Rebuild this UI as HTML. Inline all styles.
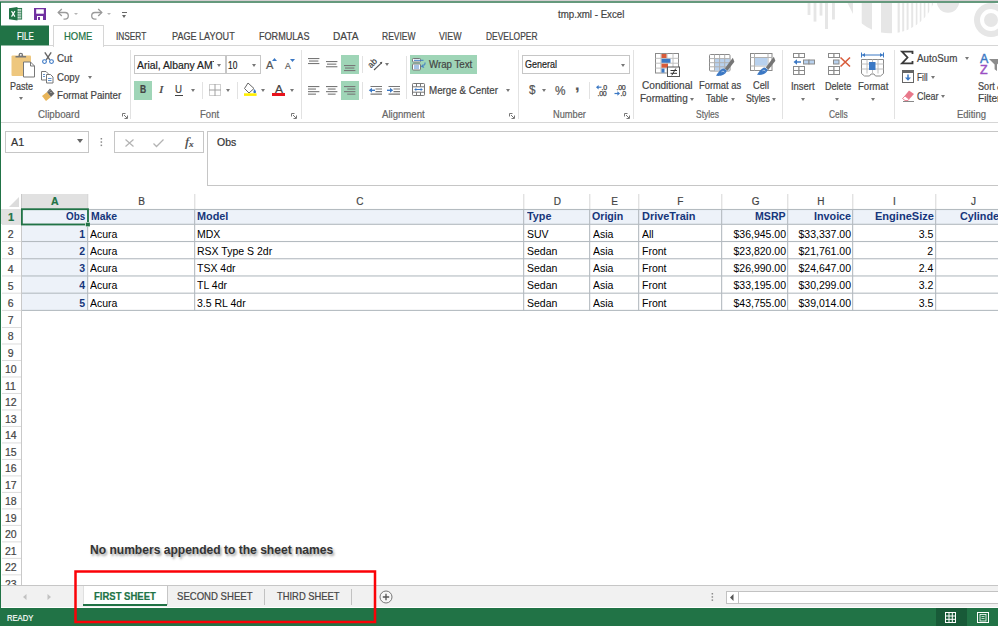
<!DOCTYPE html>
<html><head><meta charset="utf-8"><title>tmp.xml - Excel</title>
<style>
html,body{margin:0;padding:0;}
body{width:998px;height:626px;overflow:hidden;position:relative;background:#fff;font-family:"Liberation Sans",sans-serif;font-size:10px;color:#444;}
.a{position:absolute;}
.t{-webkit-text-stroke:0.2px;position:absolute;white-space:nowrap;line-height:normal;transform-origin:0 0;}
.sep{position:absolute;width:1px;background:#e2e2e2;top:50px;height:69px;}
.hl{position:absolute;background:#9fd5b7;}
.ar{position:absolute;width:0;height:0;border-left:2.5px solid transparent;border-right:2.5px solid transparent;border-top:3px solid #777;}
svg{position:absolute;overflow:visible;}

</style></head><body>
<!-- frame -->
<div class="a" style="left:0;top:0;width:998px;height:1px;background:#d4ced1"></div>
<div class="a" style="left:0;top:1px;width:998px;height:2px;background:#65997d"></div>
<div class="a" style="left:0;top:2px;width:1px;height:624px;background:#217346"></div>
<!-- title -->
<svg style="left:0;top:0" width="998" height="46" viewBox="0 0 998 46"><defs><clipPath id="cpT"><rect x="0" y="3" width="998" height="43"/></clipPath><clipPath id="cpS"><rect x="861.7" y="3" width="10.3" height="40"/><rect x="881" y="3" width="11.0" height="40"/><rect x="897.6" y="3" width="2.2" height="40"/><rect x="902.2" y="3" width="2.0" height="40"/><rect x="906.6" y="3" width="2.0" height="40"/><rect x="911.2" y="3" width="2.0" height="40"/><rect x="915.8" y="3" width="1.6" height="40"/><rect x="919.8" y="3" width="1.6" height="40"/><rect x="923.8" y="3" width="1.6" height="40"/><rect x="927.8" y="3" width="1.5" height="40"/><rect x="931.8" y="3" width="1.2" height="40"/></clipPath></defs><g fill="#e6e6e6" clip-path="url(#cpT)"><rect x="807.6" y="3" width="2.8" height="12"/><rect x="813.6" y="3" width="2.8" height="18.6"/><rect x="819.6" y="3" width="2.8" height="12.6"/><rect x="825" y="3" width="3.0" height="26"/><rect x="832" y="3" width="2.9" height="16.5"/><polygon points="847.5,3 853,3 853,14"/><circle cx="948" cy="1.5" r="11.3"/><path fill-rule="evenodd" d="M974,20 a17,17 0 1,0 34,0 a17,17 0 1,0 -34,0 Z M980,20 a11,11 0 1,0 22,0 a11,11 0 1,0 -22,0 Z"/><circle cx="991" cy="20" r="7"/></g><g clip-path="url(#cpS)"><circle cx="890" cy="-13.3" r="46.5" fill="#e6e6e6"/></g></svg>
<div class="t" style="left:558.4px;top:9.00px;font-size:10px;color:#444;transform:scaleX(0.9716);">tmp.xml - Excel</div>
<svg style="left:9px;top:7px" width="13.5" height="13.5" viewBox="0 0 16 14" preserveAspectRatio="none"><rect x="8" y="1.5" width="7" height="11" fill="#fff" stroke="#217346" stroke-width="1"/><path d="M10.5,1.5v11M13,1.5v11M8,4.5h7M8,7h7M8,9.5h7" stroke="#217346" stroke-width=".7"/><polygon points="0,1.3 10,0 10,14 0,12.7" fill="#217346"/><path d="M3,4.2l4,5.8M7,4.2l-4,5.8" stroke="#fff" stroke-width="1.4"/></svg>
<svg style="left:34px;top:8px" width="12" height="12" viewBox="0 0 12 12"><path d="M0,0h12v12h-12z" fill="#7030a0"/><rect x="2.2" y="1.3" width="7.6" height="4.4" fill="#fff"/><rect x="3" y="8" width="6" height="4" fill="#fff"/><rect x="4" y="9" width="2" height="3" fill="#7030a0"/></svg>
<svg style="left:57px;top:8px" width="14" height="12" viewBox="0 0 14 12"><path d="M1.5,4.5h6.5a3.3,3.3 0 0 1 0,6.6h-1.5" fill="none" stroke="#9a9a9a" stroke-width="1.3"/><path d="M4.8,1L1.2,4.5l3.6,3.5" fill="none" stroke="#9a9a9a" stroke-width="1.3"/></svg>
<div class="ar" style="left:73.5px;top:13px;border-top-color:#b5b5b5;border-left-width:2px;border-right-width:2px;border-top-width:2.5px"></div>
<svg style="left:88.8px;top:8px" width="14" height="12" viewBox="0 0 14 12"><path d="M12.5,4.5h-6.5a3.3,3.3 0 0 0 0,6.6h1.5" fill="none" stroke="#9a9a9a" stroke-width="1.3"/><path d="M9.2,1l3.6,3.5l-3.6,3.5" fill="none" stroke="#9a9a9a" stroke-width="1.3"/></svg>
<div class="ar" style="left:106.5px;top:13px;border-top-color:#b5b5b5;border-left-width:2px;border-right-width:2px;border-top-width:2.5px"></div>
<div class="a" style="left:122px;top:12px;width:5px;height:1px;background:#666"></div>
<div class="ar" style="left:122px;top:15px;border-top-color:#666"></div>
<!-- tabs -->
<svg style="left:0;top:0" width="60" height="50"><rect x="0" y="25.5" width="49" height="20" fill="#217346"/></svg>
<div class="a" style="left:49px;top:45px;width:949px;height:1px;background:#d6d6d6"></div>
<div class="a" style="left:53px;top:25px;width:49px;height:21px;background:#fff;border:1px solid #d6d6d6;border-bottom:0"></div>
<div class="t" style="left:16.5px;top:30.00px;font-size:10.5px;color:#fff;transform:scaleX(0.7527);">FILE</div>
<div class="t" style="left:63.6px;top:30.00px;font-size:10.5px;color:#217346;transform:scaleX(0.9016);">HOME</div>
<div class="t" style="left:116px;top:30.00px;font-size:10.5px;color:#444;transform:scaleX(0.7905);">INSERT</div>
<div class="t" style="left:171.5px;top:30.00px;font-size:10.5px;color:#444;transform:scaleX(0.8643);">PAGE LAYOUT</div>
<div class="t" style="left:258.5px;top:30.00px;font-size:10.5px;color:#444;transform:scaleX(0.8656);">FORMULAS</div>
<div class="t" style="left:332.5px;top:30.00px;font-size:10.5px;color:#444;transform:scaleX(0.964);">DATA</div>
<div class="t" style="left:381.5px;top:30.00px;font-size:10.5px;color:#444;transform:scaleX(0.8088);">REVIEW</div>
<div class="t" style="left:438.5px;top:30.00px;font-size:10.5px;color:#444;transform:scaleX(0.8382);">VIEW</div>
<div class="t" style="left:485.5px;top:30.00px;font-size:10.5px;color:#444;transform:scaleX(0.8021);">DEVELOPER</div>
<!-- ribbon -->
<div class="a" style="left:1px;top:122px;width:997px;height:1px;background:#d6d6d6"></div>
<div class="sep" style="left:130px"></div>
<div class="sep" style="left:301px"></div>
<div class="sep" style="left:518px"></div>
<div class="sep" style="left:633px"></div>
<div class="sep" style="left:782px"></div>
<div class="sep" style="left:894px"></div>
<div class="t" style="left:38px;top:108.00px;font-size:10.5px;color:#666;transform:scaleX(0.9276);">Clipboard</div>
<div class="t" style="left:199.7px;top:108.00px;font-size:10.5px;color:#666;transform:scaleX(0.9088);">Font</div>
<div class="t" style="left:381.8px;top:108.00px;font-size:10.5px;color:#666;transform:scaleX(0.9143);">Alignment</div>
<div class="t" style="left:552.9px;top:108.00px;font-size:10.5px;color:#666;transform:scaleX(0.8806);">Number</div>
<div class="t" style="left:696px;top:108.00px;font-size:10.5px;color:#666;transform:scaleX(0.8044);">Styles</div>
<div class="t" style="left:829px;top:108.00px;font-size:10.5px;color:#666;transform:scaleX(0.8011);">Cells</div>
<div class="t" style="left:956.9px;top:108.00px;font-size:10.5px;color:#666;transform:scaleX(0.9032);">Editing</div>
<svg style="left:121.5px;top:113px" width="6" height="6" viewBox="0 0 6 6"><path d="M0.5,3.5v-3h3" fill="none" stroke="#777" stroke-width="1"/><path d="M2,2l3,3M5.5,2.5v3h-3" fill="none" stroke="#777" stroke-width="1"/></svg>
<svg style="left:291px;top:113px" width="6" height="6" viewBox="0 0 6 6"><path d="M0.5,3.5v-3h3" fill="none" stroke="#777" stroke-width="1"/><path d="M2,2l3,3M5.5,2.5v3h-3" fill="none" stroke="#777" stroke-width="1"/></svg>
<svg style="left:509px;top:113px" width="6" height="6" viewBox="0 0 6 6"><path d="M0.5,3.5v-3h3" fill="none" stroke="#777" stroke-width="1"/><path d="M2,2l3,3M5.5,2.5v3h-3" fill="none" stroke="#777" stroke-width="1"/></svg>
<svg style="left:623.8px;top:113px" width="6" height="6" viewBox="0 0 6 6"><path d="M0.5,3.5v-3h3" fill="none" stroke="#777" stroke-width="1"/><path d="M2,2l3,3M5.5,2.5v3h-3" fill="none" stroke="#777" stroke-width="1"/></svg>
<svg style="left:11px;top:52px" width="24" height="26" viewBox="0 0 24 26"><rect x="0.5" y="3.5" width="19.5" height="20.5" rx="1" fill="#eec77e"/><path d="M4.5,5.500v-1.500h3v-1a2.300,2.300 0 0 1 4.600,0v1h3v1.500z" fill="#777"/><circle cx="9.800" cy="2.800" r=".9" fill="#fff"/><path d="M12.500,10h7l4,4v11h-11z" fill="#fff" stroke="#777" stroke-width="1"/><path d="M19.500,10v4h4" fill="none" stroke="#777" stroke-width="1"/></svg>
<div class="t" style="left:10px;top:80.00px;font-size:10.5px;color:#444;transform:scaleX(0.8563);">Paste</div>
<div class="ar" style="left:18.5px;top:97px;border-top-color:#777"></div>
<svg style="left:42px;top:51.5px" width="12" height="12" viewBox="0 0 12 12"><path d="M2.800,0.300l5,7.500M9.200,0.300l-5,7.500" stroke="#666" stroke-width="1.400" fill="none"/><circle cx="2.500" cy="9.600" r="1.900" fill="none" stroke="#3b78c4" stroke-width="1.100"/><circle cx="9.500" cy="9.600" r="1.900" fill="none" stroke="#3b78c4" stroke-width="1.100"/></svg>
<div class="t" style="left:57.1px;top:52.00px;font-size:10.5px;color:#444;transform:scaleX(0.9361);">Cut</div>
<svg style="left:41px;top:70.5px" width="13" height="13" viewBox="0 0 13 13"><path d="M0.500,0.500h4.500l2,2v6.500h-6.500z" fill="#fff" stroke="#777"/><path d="M2,3.500h2M2,5.500h2" stroke="#3b78c4" stroke-width=".8"/><path d="M5.500,3.500h4l2.500,2.500v6h-6.500z" fill="#fff" stroke="#777"/><path d="M7,7.500h3.500M7,9.500h3.500" stroke="#3b78c4" stroke-width=".8"/></svg>
<div class="t" style="left:57.1px;top:71.00px;font-size:10.5px;color:#444;transform:scaleX(0.9219);">Copy</div>
<div class="ar" style="left:87.7px;top:76px;border-top-color:#777"></div>
<svg style="left:41px;top:88px" width="14" height="14" viewBox="0 0 14 14"><path d="M1,8l5,-4l4,5l-5,4z" fill="#e8b55a"/><path d="M6,4l3,-3.5l4.5,5l-3.5,3.5z" fill="#666"/><path d="M8,3.5l1,-1M9.5,5l1,-1" stroke="#fff" stroke-width=".7"/></svg>
<div class="t" style="left:57.1px;top:89.00px;font-size:10.5px;color:#444;transform:scaleX(0.9244);">Format Painter</div>
<div class="a" style="left:134px;top:55px;width:90px;height:17px;border:1px solid #c6c6c6;background:#fff"></div>
<div class="a" style="left:226px;top:55px;width:33px;height:17px;border:1px solid #c6c6c6;background:#fff"></div>
<div class="t" style="left:136.6px;top:59.00px;font-size:10.5px;color:#222;transform:scaleX(0.9882);clip-path:inset(0 6% 0 0);">Arial, Albany AMT</div>
<div class="ar" style="left:217.0px;top:63.5px;border-top-color:#777"></div>
<div class="t" style="left:228px;top:59.00px;font-size:10.5px;color:#222;transform:scaleX(0.7957);">10</div>
<div class="ar" style="left:252.4px;top:63.5px;border-top-color:#777"></div>
<div class="t" style="left:266.4px;top:59.00px;font-size:11.5px;color:#555;transform:scaleX(0.9646);">A</div>
<svg style="left:272.3px;top:58.3px" width="5" height="3" viewBox="0 0 5 3"><polygon points="0,3 2.5,0 5,3" fill="#3b78c4"/></svg>
<div class="t" style="left:285.2px;top:60.00px;font-size:9.5px;color:#555;transform:scaleX(0.9143);">A</div>
<svg style="left:289.8px;top:59px" width="5" height="3" viewBox="0 0 5 3"><polygon points="0,0 2.5,3 5,0" fill="#3b78c4"/></svg>
<div class="hl" style="left:134px;top:81px;width:18px;height:19px"></div>
<div class="t" style="left:139.8px;top:83.00px;font-size:10.5px;font-weight:bold;color:#444;transform:scaleX(0.8165);">B</div>
<div class="t" style="left:158.6px;top:83.00px;font-size:11px;font-style:italic;font-family:'Liberation Serif',serif;color:#444;transform:scaleX(1.1983);">I</div>
<div class="t" style="left:175.4px;top:83.00px;font-size:10.5px;color:#444;transform:scaleX(0.9218);">U</div>
<div class="a" style="left:175px;top:95px;width:8px;height:1px;background:#444"></div>
<div class="ar" style="left:190.5px;top:89px;border-top-color:#777"></div>
<div class="a" style="left:202px;top:82px;width:1px;height:17px;background:#e2e2e2"></div>
<svg style="left:209px;top:84px" width="12" height="12" viewBox="0 0 12 12"><rect x="0.5" y="0.5" width="11" height="11" fill="none" stroke="#a0a0a0" stroke-dasharray="1 1"/><path d="M6,0v12M0,6h12" stroke="#a0a0a0" stroke-width="1"/></svg>
<div class="ar" style="left:226.0px;top:89px;border-top-color:#777"></div>
<div class="a" style="left:237px;top:82px;width:1px;height:17px;background:#e2e2e2"></div>
<svg style="left:243px;top:82px" width="14" height="15" viewBox="0 0 14 15"><path d="M5,1l6,5.5l-5,4.5l-4.5,-4.5z" fill="#fff" stroke="#666" stroke-width="1"/><path d="M11.5,7c1,1.5 1.5,2.3 1.5,3a1.2,1.2 0 0 1 -2.6,0c0,-.7 .5,-1.5 1.1,-3z" fill="#3b78c4"/><rect x="1" y="11.3" width="12.6" height="2.6" fill="#ffef00"/></svg>
<div class="ar" style="left:261.0px;top:89px;border-top-color:#777"></div>
<div class="t" style="left:274.8px;top:83.00px;font-size:11px;color:#444;transform:scaleX(1.0894);">A</div>
<div class="a" style="left:271.7px;top:93.3px;width:13.5px;height:2.6px;background:#e8131c"></div>
<div class="ar" style="left:289.5px;top:89px;border-top-color:#777"></div>
<div class="hl" style="left:341px;top:55px;width:18px;height:19px"></div>
<div class="hl" style="left:341px;top:81px;width:18px;height:19px"></div>
<svg style="left:308px;top:57.8px" width="11.4" height="6.2" viewBox="0 0 11.4 6.2"><rect x="0" y="0.00" width="11.4" height="1.1" fill="#777"/><rect x="1" y="2.50" width="9.4" height="1.1" fill="#777"/><rect x="0" y="5.00" width="11.4" height="1.1" fill="#777"/></svg>
<svg style="left:326px;top:60.7px" width="11.4" height="6.400000000000003" viewBox="0 0 11.4 6.400000000000003"><rect x="0" y="0.00" width="11.4" height="1.1" fill="#777"/><rect x="1" y="2.60" width="9.4" height="1.1" fill="#777"/><rect x="0" y="5.20" width="11.4" height="1.1" fill="#777"/></svg>
<svg style="left:344.2px;top:64.9px" width="11.4" height="6.2" viewBox="0 0 11.4 6.2"><rect x="0" y="0.00" width="11.4" height="1.1" fill="#777"/><rect x="1" y="2.50" width="9.4" height="1.1" fill="#777"/><rect x="0" y="5.00" width="11.4" height="1.1" fill="#777"/></svg>
<svg style="left:308px;top:85.7px" width="11.4" height="8.799999999999994" viewBox="0 0 11.4 8.799999999999994"><rect x="0" y="0.00" width="11.4" height="1.1" fill="#777"/><rect x="0" y="2.50" width="8" height="1.1" fill="#777"/><rect x="0" y="5.10" width="11.4" height="1.1" fill="#777"/><rect x="0" y="7.60" width="8" height="1.1" fill="#777"/></svg>
<svg style="left:326px;top:85.7px" width="11.4" height="8.799999999999994" viewBox="0 0 11.4 8.799999999999994"><rect x="0" y="0.00" width="11.4" height="1.1" fill="#777"/><rect x="1.8" y="2.50" width="7.8" height="1.1" fill="#777"/><rect x="0" y="5.10" width="11.4" height="1.1" fill="#777"/><rect x="1.8" y="7.60" width="7.8" height="1.1" fill="#777"/></svg>
<svg style="left:344.2px;top:85.7px" width="11.4" height="8.799999999999994" viewBox="0 0 11.4 8.799999999999994"><rect x="0" y="0.00" width="11.4" height="1.1" fill="#777"/><rect x="3.2" y="2.50" width="8.2" height="1.1" fill="#777"/><rect x="0" y="5.10" width="11.4" height="1.1" fill="#777"/><rect x="3.2" y="7.60" width="8.2" height="1.1" fill="#777"/></svg>
<div class="a" style="left:362px;top:56px;width:1px;height:17px;background:#e2e2e2"></div>
<div class="a" style="left:362px;top:82px;width:1px;height:17px;background:#e2e2e2"></div>
<svg style="left:368px;top:56px" width="15" height="15" viewBox="0 0 15 15"><g transform="rotate(-45 6.5 7.5)"><text x="0.5" y="8.5" font-family="Liberation Sans, sans-serif" font-size="8.5" fill="#444" stroke="#444" stroke-width=".2">ab</text></g><path d="M6,14l7.500,-7.200" stroke="#555" stroke-width="1.100"/><path d="M14.300,5.800l-2.600,.5l2,2z" fill="#555"/></svg>
<div class="ar" style="left:384.9px;top:63px;border-top-color:#777"></div>
<svg style="left:369px;top:85.7px" width="14" height="9" viewBox="0 0 14 9"><path d="M1.500,0.500h11.500M6.500,3h6.500M6.500,5.600h6.500M1.500,8.100h11.500" stroke="#777" stroke-width="1.100"/><path d="M6,4.300h-4.500" stroke="#3b78c4" stroke-width="1.400"/><path d="M3,1.800l-3.200,2.500l3.200,2.500z" fill="#3b78c4"/></svg>
<svg style="left:387px;top:85.7px" width="14" height="9" viewBox="0 0 14 9"><path d="M1.500,0.500h11.500M6.500,3h6.500M6.500,5.600h6.500M1.500,8.100h11.500" stroke="#777" stroke-width="1.100"/><path d="M0,4.300h4" stroke="#3b78c4" stroke-width="1.400"/><path d="M3,1.800l3.200,2.500l-3.200,2.500z" fill="#3b78c4"/></svg>
<div class="a" style="left:406px;top:56px;width:1px;height:43px;background:#e2e2e2"></div>
<div class="hl" style="left:410px;top:55px;width:67px;height:19px"></div>
<svg style="left:412px;top:57.5px" width="14" height="13" viewBox="0 0 14 13"><rect x="0.500" y="0.500" width="8" height="3.500" rx=".8" fill="#fff" stroke="#777"/><path d="M2,2.300h9.500" stroke="#3b78c4" stroke-width="1"/><rect x="0.500" y="6" width="8" height="6" rx=".8" fill="#fff" stroke="#777"/><path d="M2,8h5M2,10h5" stroke="#3b78c4" stroke-width=".9"/><path d="M13,4.500c.3,2.500 -1,3.500 -3,3.800" fill="none" stroke="#3b78c4" stroke-width="1"/><path d="M11.300,6.300l-2,2.200l2.800,.8" fill="none" stroke="#3b78c4" stroke-width="1"/></svg>
<div class="t" style="left:428.6px;top:58.00px;font-size:10.5px;color:#444;transform:scaleX(0.9234);">Wrap Text</div>
<svg style="left:412px;top:83px" width="13" height="13" viewBox="0 0 13 13"><rect x="0.500" y="0.500" width="12" height="12" rx=".8" fill="#fff" stroke="#777"/><path d="M0.500,3.800h12M0.500,9.200h12M4.500,0.500v3.300M8.500,0.500v3.300M4.500,9.200v3.300M8.500,9.200v3.300" stroke="#777" stroke-width="1" fill="none"/><path d="M3,6.500h7" stroke="#3b78c4" stroke-width="1"/><path d="M4.300,4.900l-2.200,1.600l2.200,1.600zM8.700,4.900l2.200,1.600l-2.200,1.600z" fill="#3b78c4"/></svg>
<div class="t" style="left:428.6px;top:84.00px;font-size:10.5px;color:#444;transform:scaleX(0.9309);">Merge &amp; Center</div>
<div class="ar" style="left:505.9px;top:89px;border-top-color:#777"></div>
<div class="a" style="left:522px;top:55px;width:106px;height:17px;border:1px solid #c6c6c6;background:#fff"></div>
<div class="t" style="left:525.4px;top:58.00px;font-size:10.5px;color:#222;transform:scaleX(0.8539);">General</div>
<div class="ar" style="left:621.2px;top:63.5px;border-top-color:#777"></div>
<div class="t" style="left:528.5px;top:82.00px;font-size:13px;color:#555;transform:scaleX(0.8985);">$</div>
<div class="ar" style="left:542.0px;top:89px;border-top-color:#777"></div>
<div class="t" style="left:554.5px;top:84.00px;font-size:12.5px;color:#555;transform:scaleX(0.9438);">%</div>
<div class="t" style="left:574.5px;top:76.00px;font-size:16px;font-weight:bold;color:#555;transform:scaleX(1.0105);">,</div>
<div class="a" style="left:589px;top:82px;width:1px;height:17px;background:#e2e2e2"></div>
<svg style="left:596px;top:84px" width="13" height="13" viewBox="0 0 13 13"><text x="5.5" y="5.800" font-family="Liberation Sans, sans-serif" font-size="7" fill="#444" stroke="#444" stroke-width=".25" letter-spacing="-.3">.0</text><text x="1.500" y="12" font-family="Liberation Sans, sans-serif" font-size="7" fill="#444" stroke="#444" stroke-width=".25" letter-spacing="-.3">.00</text><path d="M5.500,3.200h-4" stroke="#3b78c4" stroke-width="1.200"/><path d="M2.600,1l-2.600,2.200l2.600,2.200z" fill="#3b78c4"/></svg>
<svg style="left:613.5px;top:84px" width="13" height="13" viewBox="0 0 13 13"><text x="2.500" y="5.800" font-family="Liberation Sans, sans-serif" font-size="7" fill="#444" stroke="#444" stroke-width=".25" letter-spacing="-.3">.00</text><text x="6.500" y="12" font-family="Liberation Sans, sans-serif" font-size="7" fill="#444" stroke="#444" stroke-width=".25" letter-spacing="-.3">.0</text><path d="M0.500,9.500h4" stroke="#3b78c4" stroke-width="1.200"/><path d="M3.400,7.300l2.600,2.200l-2.600,2.200z" fill="#3b78c4"/></svg>
<svg style="left:655px;top:53px" width="26" height="25" viewBox="0 0 26 25"><rect x="0.500" y="0.500" width="23" height="19.500" fill="#fff" stroke="#8a8a8a"/><path d="M0.500,5.300h23M0.500,10.200h23M0.500,15.100h23M6,0.500v19.500M12,0.500v19.500M18,0.500v19.500" stroke="#c0c0c0" stroke-width="1"/><rect x="6.500" y="1" width="5" height="4" fill="#d85b3a"/><rect x="6.500" y="5.800" width="9" height="4" fill="#3b78c4"/><rect x="6.500" y="10.700" width="6.500" height="4" fill="#d85b3a"/><rect x="6.500" y="15.600" width="3" height="4" fill="#3b78c4"/><rect x="12.500" y="14" width="12" height="9.500" fill="#fff" stroke="#555"/><path d="M15.500,17.500h6.500M15.500,20.300h6.500M20.800,15.500l-4,6.800" stroke="#333" stroke-width="1"/></svg>
<div class="t" style="left:641.9px;top:79.00px;font-size:10.5px;color:#444;transform:scaleX(0.961);">Conditional</div>
<div class="t" style="left:639.6px;top:92.00px;font-size:10.5px;color:#444;transform:scaleX(0.9504);">Formatting</div>
<div class="ar" style="left:689.5px;top:98px;border-top-color:#777"></div>
<svg style="left:709px;top:53.5px" width="27" height="25" viewBox="0 0 27 25"><rect x="0.500" y="0.500" width="20.500" height="16.500" rx="1" fill="#fff" stroke="#8a8a8a"/><rect x="5.500" y="4.600" width="15" height="12" fill="#b8d1ee"/><path d="M0.500,4.600h20.500M0.500,8.700h20.500M0.500,12.800h20.500M5.500,0.500v16.500M10.600,0.500v16.500M15.700,0.500v16.500" stroke="#b0b0b0" stroke-width="1"/><g transform="translate(-1,1.300)"><path d="M24.800,2.500l1.600,4l-7,9l-2.600,-2.400z" fill="#757575"/><path d="M16,13.200c-3,.2 -5,2.500 -8,7.300c4,.6 9.500,-.5 10.800,-5z" fill="#3b78c4"/><path d="M13.500,16.500c1,-.8 2.500,-.6 3,.5" fill="none" stroke="#cfe0f4" stroke-width=".8"/></g></svg>
<div class="t" style="left:698.5px;top:79.00px;font-size:10.5px;color:#444;transform:scaleX(0.8907);">Format as</div>
<div class="t" style="left:705.6px;top:92.00px;font-size:10.5px;color:#444;transform:scaleX(0.8722);">Table</div>
<div class="ar" style="left:730.5px;top:98px;border-top-color:#777"></div>
<svg style="left:750px;top:53px" width="27" height="25" viewBox="0 0 27 25"><rect x="0.500" y="0.500" width="21.500" height="17" fill="#fff" stroke="#8a8a8a"/><path d="M0.500,4.500h21.500M0.500,13h21.500M4.500,0.500v17M18,0.500v17" stroke="#b0b0b0" stroke-width="1"/><rect x="5" y="5" width="12.500" height="7.500" fill="#b8d1ee"/><g transform="translate(-1,1.300)"><path d="M24.800,2.500l1.600,4l-7,9l-2.600,-2.400z" fill="#757575"/><path d="M16,13.200c-3,.2 -5,2.500 -8,7.300c4,.6 9.500,-.5 10.800,-5z" fill="#3b78c4"/><path d="M13.500,16.500c1,-.8 2.500,-.6 3,.5" fill="none" stroke="#cfe0f4" stroke-width=".8"/></g></svg>
<div class="t" style="left:752.7px;top:79.00px;font-size:10.5px;color:#444;transform:scaleX(0.8843);">Cell</div>
<div class="t" style="left:745.7px;top:92.00px;font-size:10.5px;color:#444;transform:scaleX(0.8323);">Styles</div>
<div class="ar" style="left:771.8px;top:98px;border-top-color:#777"></div>
<svg style="left:792px;top:53px" width="23" height="22" viewBox="0 0 23 22"><rect x="1.500" y="0.500" width="5.500" height="4" fill="#fff" stroke="#8a8a8a"/><rect x="7" y="0.500" width="5.500" height="4" fill="#fff" stroke="#8a8a8a"/><rect x="1.500" y="13.500" width="5.500" height="4" fill="#fff" stroke="#8a8a8a"/><rect x="7" y="13.500" width="5.500" height="4" fill="#fff" stroke="#8a8a8a"/><rect x="1.500" y="17.500" width="5.500" height="4" fill="#fff" stroke="#8a8a8a"/><rect x="7" y="17.500" width="5.500" height="4" fill="#fff" stroke="#8a8a8a"/><rect x="11.500" y="7" width="5.500" height="4" fill="#b8d1ee" stroke="#8a8a8a"/><rect x="17" y="7" width="5.500" height="4" fill="#b8d1ee" stroke="#8a8a8a"/><path d="M9,9h-6" stroke="#3b78c4" stroke-width="1.500"/><path d="M5,6.300l-3.500,2.700l3.500,2.700z" fill="#3b78c4"/></svg>
<div class="t" style="left:791px;top:80.00px;font-size:10.5px;color:#444;transform:scaleX(0.8985);">Insert</div>
<div class="ar" style="left:800.6px;top:98px;border-top-color:#777"></div>
<svg style="left:827px;top:53px" width="25" height="22" viewBox="0 0 25 22"><rect x="1.500" y="0.500" width="5.500" height="4" fill="#fff" stroke="#8a8a8a"/><rect x="7" y="0.500" width="5.500" height="4" fill="#fff" stroke="#8a8a8a"/><rect x="1.500" y="13.500" width="5.500" height="4" fill="#fff" stroke="#8a8a8a"/><rect x="7" y="13.500" width="5.500" height="4" fill="#fff" stroke="#8a8a8a"/><rect x="1.500" y="17.500" width="5.500" height="4" fill="#fff" stroke="#8a8a8a"/><rect x="7" y="17.500" width="5.500" height="4" fill="#fff" stroke="#8a8a8a"/><rect x="6.500" y="7" width="5.500" height="4" fill="#b8d1ee" stroke="#8a8a8a"/><path d="M13.500,4.500l9.500,9M23,4.500l-9.500,9" stroke="#d85b3a" stroke-width="1.600"/></svg>
<div class="t" style="left:824.8px;top:80.00px;font-size:10.5px;color:#444;transform:scaleX(0.863);">Delete</div>
<div class="ar" style="left:834.9px;top:98px;border-top-color:#777"></div>
<svg style="left:861px;top:51.5px" width="24" height="26" viewBox="0 0 24 26"><path d="M1,3h21" stroke="#3b78c4" stroke-width="1"/><path d="M0.500,0.500v5M22.500,0.500v5" stroke="#3b78c4" stroke-width="1"/><path d="M4,1l-3,2l3,2zM19,1l3,2l-3,2z" fill="#3b78c4"/><path d="M0.500,7.500h22v14l-3,2.500h-5l-1.500,-2h-3l-1.500,2h-5l-3,-2.500z" fill="#fff" stroke="#8a8a8a"/><path d="M0.500,12h22M0.500,17h22M6,7.500v14M11.500,7.500v14M17,7.500v14" stroke="#c0c0c0" stroke-width="1"/><rect x="8" y="10" width="6.500" height="8" fill="#3b78c4"/></svg>
<div class="t" style="left:858px;top:80.00px;font-size:10.5px;color:#444;transform:scaleX(0.9109);">Format</div>
<div class="ar" style="left:870.8px;top:98px;border-top-color:#777"></div>
<svg style="left:901px;top:51px" width="13" height="13" viewBox="0 0 13 13"><path d="M11.500,3v-2.300h-10.500l5.500,5.800l-5.500,5.800h10.500v-2.300" fill="none" stroke="#3a3a3a" stroke-width="1.800"/></svg>
<div class="t" style="left:917px;top:52.00px;font-size:10.5px;color:#444;transform:scaleX(0.9328);">AutoSum</div>
<div class="ar" style="left:965.1px;top:57px;border-top-color:#777"></div>
<svg style="left:902px;top:70px" width="12" height="12.5" viewBox="0 0 12 12.5"><rect x="0.500" y="0.500" width="11" height="12" fill="#fff" stroke="#666"/><rect x="0.500" y="0.500" width="11" height="2.500" fill="#666"/><path d="M6,4.500v5" stroke="#3b78c4" stroke-width="1.500"/><path d="M3,7.500l3,3.300l3,-3.300z" fill="#3b78c4"/></svg>
<div class="t" style="left:917px;top:71.00px;font-size:10.5px;color:#444;transform:scaleX(0.7898);">Fill</div>
<div class="ar" style="left:930.9px;top:76px;border-top-color:#777"></div>
<svg style="left:901.5px;top:90px" width="13" height="12" viewBox="0 0 13 12"><path d="M7,0.500l5,3.500l-6,6.500h-3l-2.500,-2z" fill="#e8788a"/><path d="M0.500,8.500l2.500,2h3l1,-1.200l-4,-3.300z" fill="#fff" stroke="#e8788a" stroke-width=".8"/><path d="M1,11.500h11" stroke="#888" stroke-width="1"/></svg>
<div class="t" style="left:917px;top:90.00px;font-size:10.5px;color:#444;transform:scaleX(0.8608);">Clear</div>
<div class="ar" style="left:940.7px;top:95px;border-top-color:#777"></div>
<div class="t" style="left:979.7px;top:52.00px;font-size:12px;color:#3b78c4;transform:scaleX(1.0355);-webkit-text-stroke:.4px;">A</div>
<div class="t" style="left:980px;top:63.00px;font-size:12px;color:#9b4fc2;transform:scaleX(1.0349);-webkit-text-stroke:.4px;">Z</div>
<svg style="left:989px;top:59px" width="10" height="13" viewBox="0 0 10 13"><path d="M0,0h13l-5,5.500v6.500l-2.400,-1.800v-4.700z" fill="#8c8c8c"/></svg>
<div class="t" style="left:977.5px;top:80.00px;font-size:10.5px;color:#444;transform:scaleX(0.8668);">Sort</div>
<div class="t" style="left:996.6px;top:80.00px;font-size:10.5px;color:#444;transform:scaleX(1.0548);">&amp;</div>
<div class="t" style="left:977.5px;top:92.00px;font-size:10.5px;color:#444;transform:scaleX(0.9639);">Filter</div>
<!-- fbar -->
<div class="a" style="left:5px;top:131px;width:82px;height:20px;border:1px solid #c6c6c6;background:#fff"></div>
<div class="t" style="left:10.6px;top:136.00px;font-size:11px;color:#333;transform:scaleX(0.98);">A1</div>
<div class="ar" style="left:77px;top:139px;border-left-width:3.5px;border-right-width:3.5px;border-top-width:4px;border-top-color:#666"></div>
<svg style="left:100px;top:137px" width="3" height="10"><rect x=".6" y="1" width="1.5" height="1.500" fill="#8a8a8a"/><rect x=".6" y="4.300" width="1.500" height="1.500" fill="#8a8a8a"/><rect x=".6" y="7.600" width="1.500" height="1.500" fill="#8a8a8a"/></svg>
<div class="a" style="left:114px;top:131px;width:88px;height:20px;border:1px solid #c6c6c6;background:#fff"></div>
<svg style="left:124.5px;top:138.5px" width="9" height="8" viewBox="0 0 9 8"><path d="M0.5,0.5l8,7M8.5,0.5l-8,7" stroke="#b3b3b3" stroke-width="1.2" fill="none"/></svg>
<svg style="left:153px;top:138.5px" width="11" height="8" viewBox="0 0 11 8"><path d="M0.5,4.500l3,3l7,-7" stroke="#b3b3b3" stroke-width="1.300" fill="none"/></svg>
<div class="t" style="left:184.5px;top:135.00px;font-size:12.5px;font-style:italic;font-family:'Liberation Serif',serif;color:#444;transform:scaleX(1.148);">f</div>
<div class="t" style="left:188.6px;top:140.00px;font-size:8px;font-weight:bold;font-style:italic;font-family:'Liberation Serif',serif;color:#555;transform:scaleX(1.15);">x</div>
<div class="a" style="left:207px;top:131px;width:800px;height:53px;border:1px solid #c6c6c6;background:#fff"></div>
<div class="t" style="left:216.8px;top:136.00px;font-size:11px;color:#333;transform:scaleX(0.9511);">Obs</div>
<!-- grid -->
<div class="a" style="left:21px;top:194px;width:67px;height:15px;background:#e1e1e1"></div>
<div class="a" style="left:1px;top:209px;width:20px;height:15px;background:#e1e1e1"></div>
<svg style="left:0;top:0" width="998" height="586" viewBox="0 0 998 586"><rect x="22" y="209.5" width="976" height="14.80" fill="#edf2f9"/><rect x="22" y="224.30" width="65.5" height="86.10" fill="#edf2f9"/><rect x="87.3" y="194" width="1" height="15" fill="#d6d6d6"/><rect x="194.3" y="194" width="1" height="15" fill="#d6d6d6"/><rect x="523.3" y="194" width="1" height="15" fill="#d6d6d6"/><rect x="589.3" y="194" width="1" height="15" fill="#d6d6d6"/><rect x="638.3" y="194" width="1" height="15" fill="#d6d6d6"/><rect x="721.3" y="194" width="1" height="15" fill="#d6d6d6"/><rect x="787.3" y="194" width="1" height="15" fill="#d6d6d6"/><rect x="852.3" y="194" width="1" height="15" fill="#d6d6d6"/><rect x="935.3" y="194" width="1" height="15" fill="#d6d6d6"/><rect x="2" y="223.80" width="19" height="1" fill="#dcdcdc"/><rect x="2" y="241.02" width="19" height="1" fill="#dcdcdc"/><rect x="2" y="258.24" width="19" height="1" fill="#dcdcdc"/><rect x="2" y="275.46" width="19" height="1" fill="#dcdcdc"/><rect x="2" y="292.68" width="19" height="1" fill="#dcdcdc"/><rect x="2" y="309.90" width="19" height="1" fill="#dcdcdc"/><rect x="2" y="327.00" width="19" height="1" fill="#dcdcdc"/><rect x="2" y="343.49" width="19" height="1" fill="#dcdcdc"/><rect x="2" y="359.98" width="19" height="1" fill="#dcdcdc"/><rect x="2" y="376.47" width="19" height="1" fill="#dcdcdc"/><rect x="2" y="392.96" width="19" height="1" fill="#dcdcdc"/><rect x="2" y="409.45" width="19" height="1" fill="#dcdcdc"/><rect x="2" y="425.94" width="19" height="1" fill="#dcdcdc"/><rect x="2" y="442.43" width="19" height="1" fill="#dcdcdc"/><rect x="2" y="458.92" width="19" height="1" fill="#dcdcdc"/><rect x="2" y="475.41" width="19" height="1" fill="#dcdcdc"/><rect x="2" y="491.90" width="19" height="1" fill="#dcdcdc"/><rect x="2" y="508.39" width="19" height="1" fill="#dcdcdc"/><rect x="2" y="524.88" width="19" height="1" fill="#dcdcdc"/><rect x="2" y="541.37" width="19" height="1" fill="#dcdcdc"/><rect x="2" y="557.86" width="19" height="1" fill="#dcdcdc"/><rect x="2" y="574.35" width="19" height="1" fill="#dcdcdc"/><rect x="21" y="194" width="1" height="392" fill="#c9c9c9"/><rect x="22" y="208.95" width="976" height="1.1" fill="#b4bbc0"/><rect x="22" y="223.75" width="976" height="1.1" fill="#b4bbc0"/><rect x="22" y="240.97" width="976" height="1.1" fill="#b4bbc0"/><rect x="22" y="258.19" width="976" height="1.1" fill="#b4bbc0"/><rect x="22" y="275.41" width="976" height="1.1" fill="#b4bbc0"/><rect x="22" y="292.63" width="976" height="1.1" fill="#b4bbc0"/><rect x="22" y="309.85" width="976" height="1.1" fill="#b4bbc0"/><rect x="87.1" y="209" width="1.1" height="101.90" fill="#b4bbc0"/><rect x="194.1" y="209" width="1.1" height="101.90" fill="#b4bbc0"/><rect x="523.1" y="209" width="1.1" height="101.90" fill="#b4bbc0"/><rect x="589.1" y="209" width="1.1" height="101.90" fill="#b4bbc0"/><rect x="638.1" y="209" width="1.1" height="101.90" fill="#b4bbc0"/><rect x="721.1" y="209" width="1.1" height="101.90" fill="#b4bbc0"/><rect x="787.1" y="209" width="1.1" height="101.90" fill="#b4bbc0"/><rect x="852.1" y="209" width="1.1" height="101.90" fill="#b4bbc0"/><rect x="935.1" y="209" width="1.1" height="101.90" fill="#b4bbc0"/><rect x="21.9" y="209.2" width="66.1" height="15.3" fill="none" stroke="#217346" stroke-width="1.8"/><rect x="85" y="222" width="5" height="5" fill="#fff"/><rect x="85.700" y="222.600" width="4.200" height="3.800" fill="#217346"/></svg>
<svg style="left:9px;top:197px" width="11" height="11"><polygon points="10,0 10,10 0,10" fill="#dcdcdc"/></svg>
<div class="t" style="left:51.1px;top:195.00px;font-size:10.5px;font-weight:bold;color:#217346;">A</div>
<div class="t" style="left:138.3px;top:196.00px;font-size:10px;color:#444;">B</div>
<div class="t" style="left:356.3px;top:196.00px;font-size:10px;color:#444;">C</div>
<div class="t" style="left:553.8px;top:196.00px;font-size:10px;color:#444;">D</div>
<div class="t" style="left:611.3px;top:196.00px;font-size:10px;color:#444;">E</div>
<div class="t" style="left:677.3px;top:196.00px;font-size:10px;color:#444;">F</div>
<div class="t" style="left:751.8px;top:196.00px;font-size:10px;color:#444;">G</div>
<div class="t" style="left:817.3px;top:196.00px;font-size:10px;color:#444;">H</div>
<div class="t" style="left:893.0px;top:196.00px;font-size:10px;color:#444;">I</div>
<div class="t" style="left:971.0px;top:196.00px;font-size:10px;color:#444;">J</div>
<div class="t" style="left:8px;top:211.00px;font-size:11px;font-weight:bold;color:#217346;">1</div>
<div class="t" style="left:7.7px;top:228.00px;font-size:10.5px;color:#444;">2</div>
<div class="t" style="left:7.7px;top:245.00px;font-size:10.5px;color:#444;">3</div>
<div class="t" style="left:7.7px;top:263.00px;font-size:10.5px;color:#444;">4</div>
<div class="t" style="left:7.7px;top:280.00px;font-size:10.5px;color:#444;">5</div>
<div class="t" style="left:7.7px;top:297.00px;font-size:10.5px;color:#444;">6</div>
<div class="t" style="left:7.7px;top:314.00px;font-size:10.5px;color:#444;">7</div>
<div class="t" style="left:7.7px;top:330.00px;font-size:10.5px;color:#444;">8</div>
<div class="t" style="left:7.7px;top:347.00px;font-size:10.5px;color:#444;">9</div>
<div class="t" style="left:4.9px;top:363.00px;font-size:10.5px;color:#444;">10</div>
<div class="t" style="left:4.9px;top:380.00px;font-size:10.5px;color:#444;">11</div>
<div class="t" style="left:4.9px;top:396.00px;font-size:10.5px;color:#444;">12</div>
<div class="t" style="left:4.9px;top:413.00px;font-size:10.5px;color:#444;">13</div>
<div class="t" style="left:4.9px;top:429.00px;font-size:10.5px;color:#444;">14</div>
<div class="t" style="left:4.9px;top:446.00px;font-size:10.5px;color:#444;">15</div>
<div class="t" style="left:4.9px;top:462.00px;font-size:10.5px;color:#444;">16</div>
<div class="t" style="left:4.9px;top:479.00px;font-size:10.5px;color:#444;">17</div>
<div class="t" style="left:4.9px;top:495.00px;font-size:10.5px;color:#444;">18</div>
<div class="t" style="left:4.9px;top:512.00px;font-size:10.5px;color:#444;">19</div>
<div class="t" style="left:4.9px;top:528.00px;font-size:10.5px;color:#444;">20</div>
<div class="t" style="left:4.9px;top:545.00px;font-size:10.5px;color:#444;">21</div>
<div class="t" style="left:4.9px;top:561.00px;font-size:10.5px;color:#444;">22</div>
<div class="t" style="left:4.9px;top:578.00px;font-size:10.5px;color:#444;">23</div>
<div class="t" style="left:66.4px;top:210.00px;font-size:11px;font-weight:bold;color:#16367b;transform:scaleX(0.8969);-webkit-text-stroke:0;">Obs</div>
<div class="t" style="left:90.6px;top:210.00px;font-size:11px;font-weight:bold;color:#16367b;transform:scaleX(0.9516);-webkit-text-stroke:0;">Make</div>
<div class="t" style="left:197.2px;top:210.00px;font-size:11px;font-weight:bold;color:#16367b;transform:scaleX(0.988);-webkit-text-stroke:0;">Model</div>
<div class="t" style="left:527px;top:210.00px;font-size:11px;font-weight:bold;color:#16367b;transform:scaleX(0.9815);-webkit-text-stroke:0;">Type</div>
<div class="t" style="left:592.2px;top:210.00px;font-size:11px;font-weight:bold;color:#16367b;transform:scaleX(0.9663);-webkit-text-stroke:0;">Origin</div>
<div class="t" style="left:641.8px;top:210.00px;font-size:11px;font-weight:bold;color:#16367b;transform:scaleX(0.9942);-webkit-text-stroke:0;">DriveTrain</div>
<div class="t" style="left:755px;top:210.00px;font-size:11px;font-weight:bold;color:#16367b;transform:scaleX(0.9628);-webkit-text-stroke:0;">MSRP</div>
<div class="t" style="left:813.6px;top:210.00px;font-size:11px;font-weight:bold;color:#16367b;transform:scaleX(0.9787);-webkit-text-stroke:0;">Invoice</div>
<div class="t" style="left:874.5px;top:210.00px;font-size:11px;font-weight:bold;color:#16367b;transform:scaleX(1.0036);-webkit-text-stroke:0;">EngineSize</div>
<div class="t" style="left:959.7px;top:210.00px;font-size:11px;font-weight:bold;color:#16367b;transform:scaleX(0.9832);-webkit-text-stroke:0;">Cylinders</div>
<div class="t" style="right:912.80px;transform-origin:100% 0;top:228.00px;font-size:11px;color:#16367b;transform:scaleX(.955);-webkit-text-stroke:0;font-weight:bold;">1</div>
<div class="t" style="left:90.2px;transform-origin:0 0;top:228.00px;font-size:11px;color:#000;transform:scaleX(.955);-webkit-text-stroke:0;">Acura</div>
<div class="t" style="left:197.2px;transform-origin:0 0;top:228.00px;font-size:11px;color:#000;transform:scaleX(.955);-webkit-text-stroke:0;">MDX</div>
<div class="t" style="left:526.5px;transform-origin:0 0;top:228.00px;font-size:11px;color:#000;transform:scaleX(.955);-webkit-text-stroke:0;">SUV</div>
<div class="t" style="left:592.5px;transform-origin:0 0;top:228.00px;font-size:11px;color:#000;transform:scaleX(.955);-webkit-text-stroke:0;">Asia</div>
<div class="t" style="left:641.5px;transform-origin:0 0;top:228.00px;font-size:11px;color:#000;transform:scaleX(.955);-webkit-text-stroke:0;">All</div>
<div class="t" style="right:212.20px;transform-origin:100% 0;top:228.00px;font-size:11px;color:#000;transform:scaleX(.955);-webkit-text-stroke:0;">$36,945.00</div>
<div class="t" style="right:146.80px;transform-origin:100% 0;top:228.00px;font-size:11px;color:#000;transform:scaleX(.955);-webkit-text-stroke:0;">$33,337.00</div>
<div class="t" style="right:64.50px;transform-origin:100% 0;top:228.00px;font-size:11px;color:#000;transform:scaleX(.955);-webkit-text-stroke:0;">3.5</div>
<div class="t" style="right:912.80px;transform-origin:100% 0;top:245.00px;font-size:11px;color:#16367b;transform:scaleX(.955);-webkit-text-stroke:0;font-weight:bold;">2</div>
<div class="t" style="left:90.2px;transform-origin:0 0;top:245.00px;font-size:11px;color:#000;transform:scaleX(.955);-webkit-text-stroke:0;">Acura</div>
<div class="t" style="left:197.2px;transform-origin:0 0;top:245.00px;font-size:11px;color:#000;transform:scaleX(.955);-webkit-text-stroke:0;">RSX Type S 2dr</div>
<div class="t" style="left:526.5px;transform-origin:0 0;top:245.00px;font-size:11px;color:#000;transform:scaleX(.955);-webkit-text-stroke:0;">Sedan</div>
<div class="t" style="left:592.5px;transform-origin:0 0;top:245.00px;font-size:11px;color:#000;transform:scaleX(.955);-webkit-text-stroke:0;">Asia</div>
<div class="t" style="left:641.5px;transform-origin:0 0;top:245.00px;font-size:11px;color:#000;transform:scaleX(.955);-webkit-text-stroke:0;">Front</div>
<div class="t" style="right:212.20px;transform-origin:100% 0;top:245.00px;font-size:11px;color:#000;transform:scaleX(.955);-webkit-text-stroke:0;">$23,820.00</div>
<div class="t" style="right:146.80px;transform-origin:100% 0;top:245.00px;font-size:11px;color:#000;transform:scaleX(.955);-webkit-text-stroke:0;">$21,761.00</div>
<div class="t" style="right:64.50px;transform-origin:100% 0;top:245.00px;font-size:11px;color:#000;transform:scaleX(.955);-webkit-text-stroke:0;">2</div>
<div class="t" style="right:912.80px;transform-origin:100% 0;top:262.00px;font-size:11px;color:#16367b;transform:scaleX(.955);-webkit-text-stroke:0;font-weight:bold;">3</div>
<div class="t" style="left:90.2px;transform-origin:0 0;top:262.00px;font-size:11px;color:#000;transform:scaleX(.955);-webkit-text-stroke:0;">Acura</div>
<div class="t" style="left:197.2px;transform-origin:0 0;top:262.00px;font-size:11px;color:#000;transform:scaleX(.955);-webkit-text-stroke:0;">TSX 4dr</div>
<div class="t" style="left:526.5px;transform-origin:0 0;top:262.00px;font-size:11px;color:#000;transform:scaleX(.955);-webkit-text-stroke:0;">Sedan</div>
<div class="t" style="left:592.5px;transform-origin:0 0;top:262.00px;font-size:11px;color:#000;transform:scaleX(.955);-webkit-text-stroke:0;">Asia</div>
<div class="t" style="left:641.5px;transform-origin:0 0;top:262.00px;font-size:11px;color:#000;transform:scaleX(.955);-webkit-text-stroke:0;">Front</div>
<div class="t" style="right:212.20px;transform-origin:100% 0;top:262.00px;font-size:11px;color:#000;transform:scaleX(.955);-webkit-text-stroke:0;">$26,990.00</div>
<div class="t" style="right:146.80px;transform-origin:100% 0;top:262.00px;font-size:11px;color:#000;transform:scaleX(.955);-webkit-text-stroke:0;">$24,647.00</div>
<div class="t" style="right:64.50px;transform-origin:100% 0;top:262.00px;font-size:11px;color:#000;transform:scaleX(.955);-webkit-text-stroke:0;">2.4</div>
<div class="t" style="right:912.80px;transform-origin:100% 0;top:279.00px;font-size:11px;color:#16367b;transform:scaleX(.955);-webkit-text-stroke:0;font-weight:bold;">4</div>
<div class="t" style="left:90.2px;transform-origin:0 0;top:279.00px;font-size:11px;color:#000;transform:scaleX(.955);-webkit-text-stroke:0;">Acura</div>
<div class="t" style="left:197.2px;transform-origin:0 0;top:279.00px;font-size:11px;color:#000;transform:scaleX(.955);-webkit-text-stroke:0;">TL 4dr</div>
<div class="t" style="left:526.5px;transform-origin:0 0;top:279.00px;font-size:11px;color:#000;transform:scaleX(.955);-webkit-text-stroke:0;">Sedan</div>
<div class="t" style="left:592.5px;transform-origin:0 0;top:279.00px;font-size:11px;color:#000;transform:scaleX(.955);-webkit-text-stroke:0;">Asia</div>
<div class="t" style="left:641.5px;transform-origin:0 0;top:279.00px;font-size:11px;color:#000;transform:scaleX(.955);-webkit-text-stroke:0;">Front</div>
<div class="t" style="right:212.20px;transform-origin:100% 0;top:279.00px;font-size:11px;color:#000;transform:scaleX(.955);-webkit-text-stroke:0;">$33,195.00</div>
<div class="t" style="right:146.80px;transform-origin:100% 0;top:279.00px;font-size:11px;color:#000;transform:scaleX(.955);-webkit-text-stroke:0;">$30,299.00</div>
<div class="t" style="right:64.50px;transform-origin:100% 0;top:279.00px;font-size:11px;color:#000;transform:scaleX(.955);-webkit-text-stroke:0;">3.2</div>
<div class="t" style="right:912.80px;transform-origin:100% 0;top:297.00px;font-size:11px;color:#16367b;transform:scaleX(.955);-webkit-text-stroke:0;font-weight:bold;">5</div>
<div class="t" style="left:90.2px;transform-origin:0 0;top:297.00px;font-size:11px;color:#000;transform:scaleX(.955);-webkit-text-stroke:0;">Acura</div>
<div class="t" style="left:197.2px;transform-origin:0 0;top:297.00px;font-size:11px;color:#000;transform:scaleX(.955);-webkit-text-stroke:0;">3.5 RL 4dr</div>
<div class="t" style="left:526.5px;transform-origin:0 0;top:297.00px;font-size:11px;color:#000;transform:scaleX(.955);-webkit-text-stroke:0;">Sedan</div>
<div class="t" style="left:592.5px;transform-origin:0 0;top:297.00px;font-size:11px;color:#000;transform:scaleX(.955);-webkit-text-stroke:0;">Asia</div>
<div class="t" style="left:641.5px;transform-origin:0 0;top:297.00px;font-size:11px;color:#000;transform:scaleX(.955);-webkit-text-stroke:0;">Front</div>
<div class="t" style="right:212.20px;transform-origin:100% 0;top:297.00px;font-size:11px;color:#000;transform:scaleX(.955);-webkit-text-stroke:0;">$43,755.00</div>
<div class="t" style="right:146.80px;transform-origin:100% 0;top:297.00px;font-size:11px;color:#000;transform:scaleX(.955);-webkit-text-stroke:0;">$39,014.00</div>
<div class="t" style="right:64.50px;transform-origin:100% 0;top:297.00px;font-size:11px;color:#000;transform:scaleX(.955);-webkit-text-stroke:0;">3.5</div>
<div class="t" style="left:90.3px;top:543.00px;font-size:12px;font-weight:bold;color:#333;transform:scaleX(1.0048);text-shadow:1.5px 1.5px 2.5px rgba(0,0,0,.4);-webkit-text-stroke:0;">No numbers appended to the sheet names</div>
<!-- sheettabs -->
<div class="a" style="left:1px;top:586px;width:997px;height:21px;background:#f1f1f1"></div>
<div class="a" style="left:1px;top:585px;width:997px;height:1px;background:#c6c6c6"></div>
<svg style="left:23px;top:593.5px" width="4" height="6"><polygon points="3.5,0 3.5,6 0,3" fill="#c2c2c2"/></svg>
<svg style="left:46.5px;top:593.5px" width="4" height="6"><polygon points="0.5,0 0.5,6 4,3" fill="#c2c2c2"/></svg>
<div class="a" style="left:83px;top:586px;width:83px;height:19px;background:#fff;border-right:1px solid #c6c6c6;border-left:1px solid #e0e0e0"></div>
<div class="a" style="left:83px;top:604px;width:84px;height:2px;background:#217346"></div>
<div class="t" style="left:94px;top:590.00px;font-size:10.5px;font-weight:bold;color:#217346;transform:scaleX(0.9053);">FIRST SHEET</div>
<div class="t" style="left:177.2px;top:590.00px;font-size:10.5px;color:#444;transform:scaleX(0.9112);">SECOND SHEET</div>
<div class="a" style="left:264px;top:589px;width:1px;height:16px;background:#c2c2c2"></div>
<div class="t" style="left:277px;top:590.00px;font-size:10.5px;color:#444;transform:scaleX(0.8941);">THIRD SHEET</div>
<div class="a" style="left:351px;top:589px;width:1px;height:16px;background:#c2c2c2"></div>
<svg style="left:379px;top:590px" width="14" height="14" viewBox="0 0 14 14"><circle cx="7" cy="7" r="6" fill="#f7f7f7" stroke="#777" stroke-width="1"/><path d="M7,3.800v6.400M3.800,7h6.400" stroke="#555" stroke-width="1.300"/></svg>
<svg style="left:711px;top:592px" width="3" height="10"><rect x=".6" y="1" width="1.500" height="1.500" fill="#8a8a8a"/><rect x=".6" y="4.200" width="1.500" height="1.500" fill="#8a8a8a"/><rect x=".6" y="7.400" width="1.500" height="1.500" fill="#8a8a8a"/></svg>
<div class="a" style="left:726px;top:591px;width:280px;height:11px;background:#fff;border:1px solid #c2c2c2"></div>
<div class="a" style="left:738px;top:591px;width:1px;height:13px;background:#c2c2c2"></div>
<svg style="left:729.5px;top:594px" width="4" height="7"><polygon points="3.500,0 3.500,7 0,3.500" fill="#555"/></svg>
<!-- status -->
<div class="a" style="left:0;top:608px;width:998px;height:18px;background:#217346"></div>
<div class="a" style="left:936px;top:608px;width:31px;height:18px;background:#185a38"></div>
<div class="t" style="left:7px;top:612.00px;font-size:9.5px;color:#fff;transform:scaleX(0.8034);">READY</div>
<svg style="left:945px;top:612px" width="11" height="11" viewBox="0 0 11 11"><rect x="0.500" y="0.500" width="10" height="10" fill="none" stroke="#fff"/><path d="M0,4h11M0,7.300h11M4,0v11M7.300,0v11" stroke="#fff" stroke-width="1"/></svg>
<svg style="left:976.500px;top:612px" width="12" height="11" viewBox="0 0 12 11"><rect x="0.500" y="0.500" width="11" height="10" fill="none" stroke="#fff"/><rect x="3" y="2.500" width="6" height="6.500" fill="none" stroke="#fff" stroke-width=".8"/><path d="M4.500,4.500h3M4.500,6.500h3" stroke="#fff" stroke-width=".7"/></svg>
<svg style="left:0;top:0" width="998" height="626" viewBox="0 0 998 626"><rect x="75.500" y="571.500" width="299.500" height="50.500" fill="none" stroke="#fb0207" stroke-width="2.500"/></svg>
</body></html>
